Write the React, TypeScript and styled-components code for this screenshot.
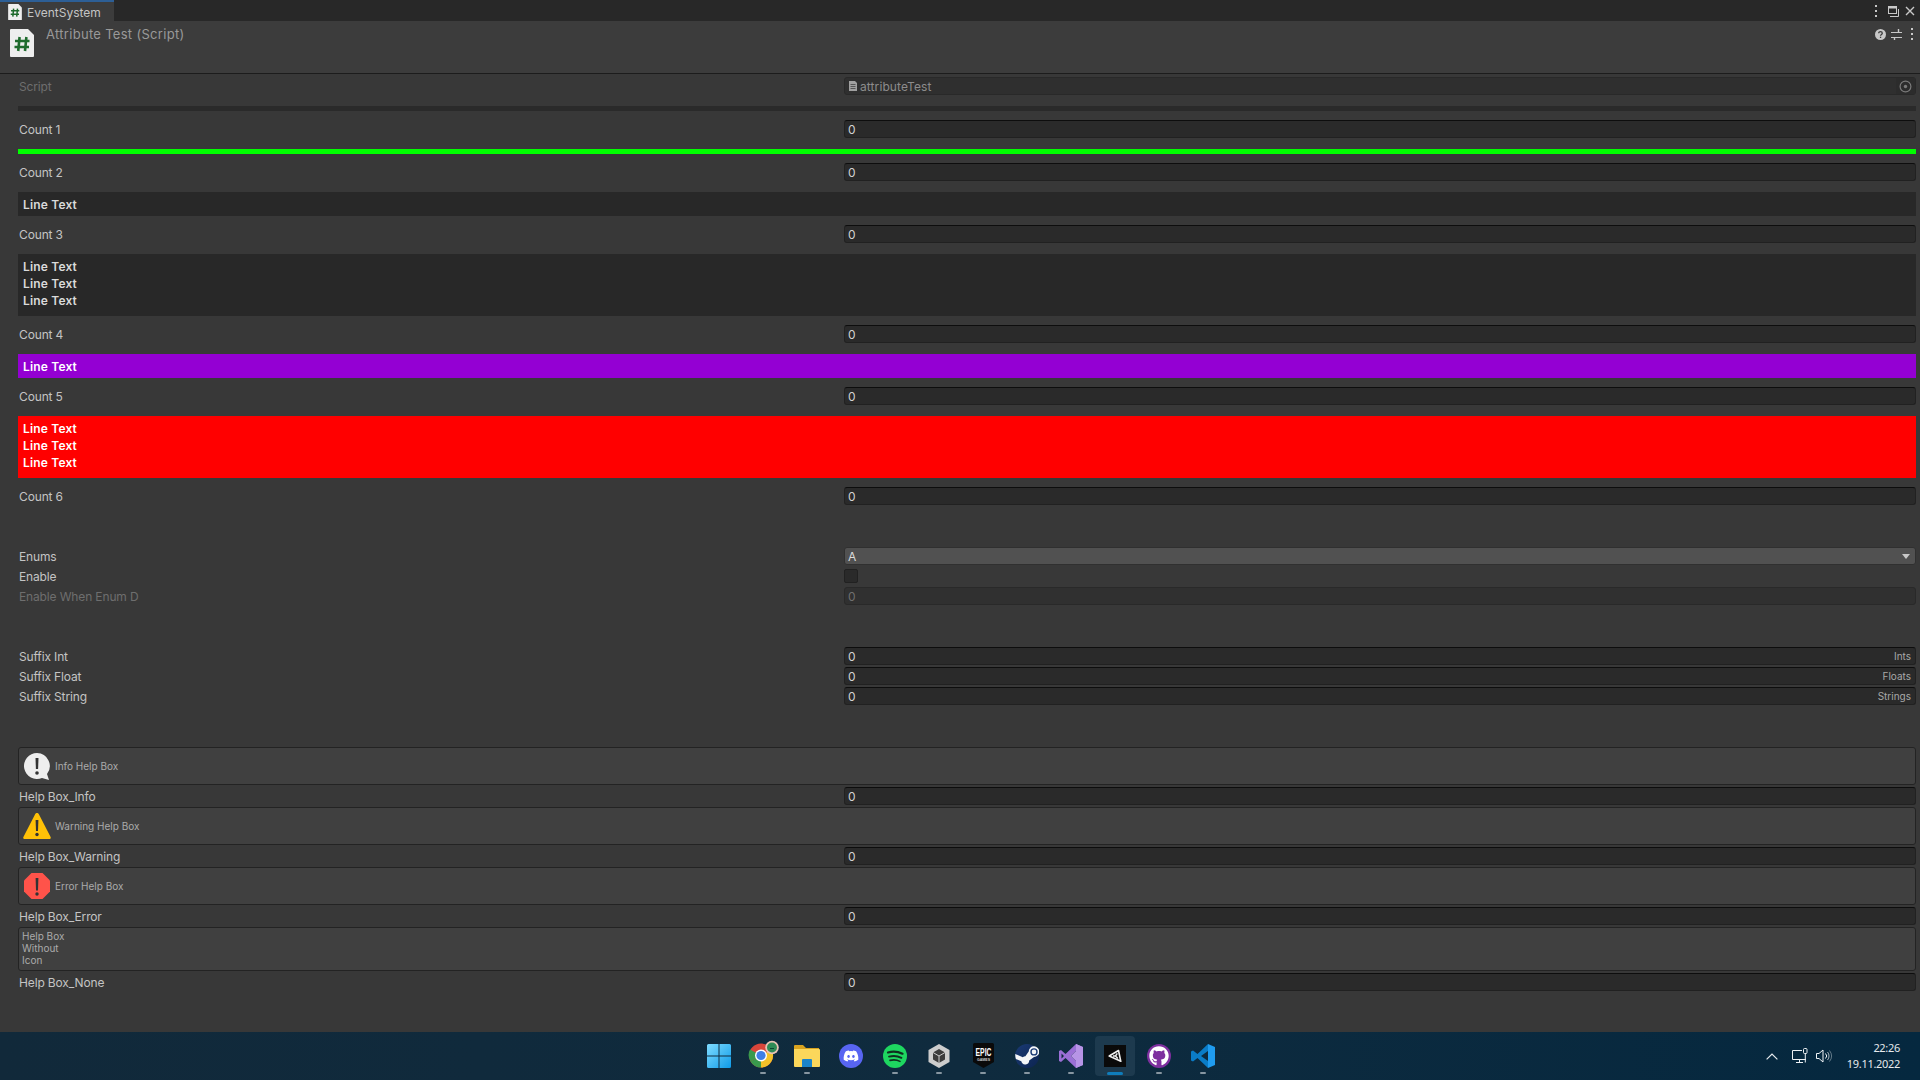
import React from "react";
import styled, { createGlobalStyle } from "styled-components";
import { FaDiscord, FaGithub } from "react-icons/fa";

const Global = createGlobalStyle`
  html, body { margin: 0; padding: 0; background: #383838; }
  body { font-family: Inter, "Liberation Sans", sans-serif; font-size: 12px; overflow: hidden; }
  * { box-sizing: border-box; }
`;

const Screen = styled.div`
  width: 1920px; height: 1080px; display: flex; flex-direction: column; background: #383838;
`;
const TabBar = styled.div`
  height: 21px; background: #282828; display: flex; justify-content: space-between; flex: none;
`;
const Tab = styled.div`
  width: 114px; height: 21px; background: #3c3c3c; border-top: 2px solid #2d5f96; display: flex; align-items: center;
  gap: 5px; padding-left: 8px; padding-top: 1px; color: #c4c4c4; font-size: 12px;
`;
const WindowTools = styled.div`
  display: flex; align-items: center; gap: 3px; padding-right: 3px; padding-top: 1px; color: #c8c8c8;
`;
const ToolSlot = styled.span`
  width: 14px; height: 14px; display: flex; align-items: center; justify-content: center;
`;
const Header = styled.header`
  height: 53px; flex: none; background: #3c3c3c; border-bottom: 1px solid #1c1c1c; display: flex; padding: 8px 1px 0 10px;
`;
const HeaderTitle = styled.div`
  flex: 1; margin-left: 12px; margin-top: -3px; color: #999; font-size: 13px; letter-spacing: 0.3px; line-height: 16px;
`;
const HeaderTools = styled.div`
  display: flex; gap: 2px; color: #c8c8c8; margin-top: -2px; height: 14px;
`;
const Panel = styled.main`
  flex: 1; padding: 0 4px 0 18px; display: flex; flex-direction: column; min-height: 0;
`;
const Row = styled.div<{ $mt: number }>`
  display: flex; height: 18px; flex: none; margin-top: ${(p) => p.$mt}px; align-items: center;
`;
const Label = styled.div<{ $dim?: boolean }>`
  width: 826px; flex: none; padding-left: 1px; color: ${(p) => (p.$dim ? "#6e6e6e" : "#c4c4c4")}; font-size: 12px; letter-spacing: -0.14px;
`;
const Field = styled.div`
  flex: 1; height: 18px; display: flex; align-items: center; justify-content: space-between;
  background: #2a2a2a; border: 1px solid #212121; border-top-color: #0d0d0d; border-radius: 3px;
  padding: 0 4px 0 3px; color: #d2d2d2; font-size: 12px;
`;
const DisabledField = styled(Field)`
  background: #303030; border-color: #292929; color: #6f6f6f;
`;
const Suffix = styled.span`
  font-size: 10px; color: #a8a8a8;
`;
const ScriptField = styled.div`
  flex: 1; height: 18px; display: flex; align-items: center; gap: 3px; background: #2f2f2f;
  border: 1px solid #292929; border-radius: 3px; padding-left: 4px; color: #8c8c8c; font-size: 12px; letter-spacing: 0.1px;
`;
const ScriptName = styled.span`
  flex: 1;
`;
const TargetButton = styled.span`
  width: 19px; height: 16px; background: #2c2c2c; display: flex; align-items: center; justify-content: center;
`;
const Enum = styled.div`
  flex: 1; height: 18px; display: flex; align-items: center; justify-content: space-between; background: #515151;
  border: 1px solid #303030; border-radius: 3px; padding: 0 5px 0 3px; color: #dcdcdc; font-size: 12px;
`;
const Arrow = styled.span`
  width: 0; height: 0; border-left: 4px solid transparent; border-right: 4px solid transparent; border-top: 5px solid #c8c8c8;
`;
const Check = styled.div`
  width: 14px; height: 14px; background: #2a2a2a; border: 1px solid #212121; border-radius: 2px;
`;
const Rule = styled.div<{ $mt: number; $color: string }>`
  height: 5px; flex: none; margin-top: ${(p) => p.$mt}px; background: ${(p) => p.$color};
`;
const LineBox = styled.div<{ $mt: number; $color: string; $multi?: boolean }>`
  flex: none; height: ${(p) => (p.$multi ? 62 : 24)}px; margin-top: ${(p) => p.$mt}px; background: ${(p) => p.$color};
  padding: 4px 5px; color: ${(p) => (p.$color === "#282828" ? "#dadada" : "#ffffff")};
  font-weight: 600; font-size: 12px; line-height: 17px; letter-spacing: 0.17px;
`;
const HelpBox = styled.div<{ $mt: number }>`
  flex: none; height: 38px; margin-top: ${(p) => p.$mt}px; display: flex; align-items: center; gap: 4px; padding-left: 4px;
  background: #404040; border: 1px solid #232323; border-radius: 3px; color: #ababab; font-size: 10px;
`;
const PlainHelp = styled.div<{ $mt: number }>`
  flex: none; height: 44px; margin-top: ${(p) => p.$mt}px; padding: 2px 3px; background: #404040; border: 1px solid #232323;
  border-radius: 3px; color: #ababab; font-size: 10px; line-height: 12px;
`;

const Taskbar = styled.footer`
  height: 48px; flex: none; background: linear-gradient(90deg, #11293a 0%, #0f2b3e 50%, #05283f 100%);
  display: grid; grid-template-columns: 1fr auto 1fr; align-items: stretch;
`;
const AppStrip = styled.div`
  grid-column: 2; display: flex; padding-left: 1px; margin-right: -1px;
`;
const AppSlot = styled.div<{ $active?: boolean }>`
  position: relative; width: 44px; height: 48px; display: flex; align-items: center; justify-content: center;
  padding-bottom: 1px;
  &::before {
    content: ""; position: absolute; left: 2px; right: 2px; top: 4px; bottom: 4px; border-radius: 4px;
    background: ${(p) => (p.$active ? "#1d3a4e" : "transparent")};
  }
  & > * { position: relative; }
`;
const RunDot = styled.span<{ $active?: boolean }>`
  position: absolute !important; left: 50%; bottom: ${(p) => (p.$active ? 5 : 6)}px; transform: translateX(-50%);
  width: ${(p) => (p.$active ? 16 : 6)}px; height: ${(p) => (p.$active ? 3 : 2)}px; border-radius: 2px;
  background: ${(p) => (p.$active ? "#0f7dbb" : "#8796a1")};
`;
const RoundIcon = styled.span<{ $color: string }>`
  width: 24px; height: 24px; border-radius: 50%; background: ${(p) => p.$color}; color: #fff;
  display: flex; align-items: center; justify-content: center;
`;
const UnityTile = styled.span`
  width: 22px; height: 22px; background: #0a0a0a; display: flex; align-items: center; justify-content: center;
`;
const Tray = styled.div`
  grid-column: 3; display: flex; align-items: center; justify-content: flex-end; padding-right: 20px; color: #eef2f5;
`;
const TrayIcon = styled.span<{ $w: number }>`
  width: ${(p) => p.$w}px; display: flex; justify-content: center;
`;
const Clock = styled.div`
  margin-left: 10px; width: 56px; text-align: right; font-family: "Noto Sans", sans-serif; font-size: 11px; line-height: 16px;
  letter-spacing: -0.3px; color: #e6eaed;
`;

const ScriptIcon = ({ w, h }: { w: number; h: number }) => (
  <svg width={w} height={h} viewBox="0 0 24 28" style={{ flex: "none" }}>
    <path d="M1 0h17l6 6v21a1 1 0 0 1-1 1H1a1 1 0 0 1-1-1V1a1 1 0 0 1 1-1z" fill="#eeeeee" />
    <g stroke="#1f6b2d" strokeWidth="2.6" fill="none">
      <path d="M9.6 8l-1.4 14M16.4 8L15 22M5 12h14.5M4.5 18H19" />
    </g>
  </svg>
);
const Dots = () => (
  <svg width="4" height="12" viewBox="0 0 4 12"><g fill="#c8c8c8"><rect x="1" y="0" width="2" height="2" /><rect x="1" y="5" width="2" height="2" /><rect x="1" y="10" width="2" height="2" /></g></svg>
);
const Restore = () => (
  <svg width="11" height="11" viewBox="0 0 11 11" fill="none" stroke="#c8c8c8"><rect x="0.5" y="0.5" width="8" height="7" /><path d="M0.5 1.5h8" strokeWidth="2" /><path d="M2 10.5h8.5V3" /></svg>
);
const Close = () => (
  <svg width="10" height="10" viewBox="0 0 10 10" stroke="#c8c8c8" strokeWidth="1.4"><path d="M1 1l8 8M9 1l-8 8" /></svg>
);
const Help = () => (
  <svg width="11" height="11" viewBox="0 0 11 11"><circle cx="5.5" cy="5.5" r="5.5" fill="#c8c8c8" /><path d="M3.7 4.2c0-2.2 3.6-2.2 3.6 0 0 1.3-1.8 1.2-1.8 2.6" fill="none" stroke="#3c3c3c" strokeWidth="1.3" /><rect x="4.9" y="7.7" width="1.3" height="1.3" fill="#3c3c3c" /></svg>
);
const Sliders = () => (
  <svg width="11" height="11" viewBox="0 0 11 11" stroke="#c8c8c8"><path d="M0 3.5h11M0 8.5h11" /><path d="M7.5 0v3.5M3.5 8.5v2.5" strokeWidth="1.4" /></svg>
);
const Target = () => (
  <svg width="13" height="13" viewBox="0 0 13 13"><circle cx="6.5" cy="6.5" r="5.4" fill="none" stroke="#7a7a7a" strokeWidth="1.2" /><circle cx="6.5" cy="6.5" r="1.7" fill="#7a7a7a" /></svg>
);
const MiniDoc = () => (
  <svg width="8" height="10" viewBox="0 0 8 10"><path d="M0 0h6l2 2v8H0z" fill="#a0a0a0" /><path d="M1.5 3.5h5M1.5 5.5h5M1.5 7.5h5" stroke="#555" /></svg>
);
const InfoIcon = () => (
  <svg width="28" height="29" viewBox="0 0 28 29">
    <path d="M14 1a13 13 0 1 0 5 25l7 2-2-6A13 13 0 0 0 14 1z" fill="#eeeeee" />
    <path d="M12.5 6h3l-.4 11h-2.2z" fill="#333" /><circle cx="14" cy="21" r="1.8" fill="#333" />
  </svg>
);
const WarnIcon = () => (
  <svg width="28" height="28" viewBox="0 0 28 28">
    <path d="M14 1c1 0 1.6.6 2 1.4L27.6 25c.5 1-.2 2-1.3 2H1.7C.6 27-.1 26 .4 25L12 2.4C12.4 1.6 13 1 14 1z" fill="#ffc107" />
    <path d="M12.6 8h2.8l-.4 11h-2z" fill="#333" /><circle cx="14" cy="22.5" r="1.7" fill="#333" />
  </svg>
);
const ErrorIcon = () => (
  <svg width="28" height="28" viewBox="0 0 28 28">
    <path d="M8.5 1h11L27 8.5v11L19.5 27h-11L1 19.5v-11z" fill="#ff534a" />
    <path d="M12.6 6h2.8l-.4 12.5h-2z" fill="#333" /><circle cx="14" cy="22" r="1.7" fill="#333" />
  </svg>
);

const WinLogo = () => (
  <svg width="24" height="24" viewBox="0 0 24 24">
    <defs><linearGradient id="win" x1="0" y1="0" x2="1" y2="1"><stop offset="0" stopColor="#7fdcff" /><stop offset="1" stopColor="#0f9be8" /></linearGradient></defs>
    <path d="M1.5 0H11.5V11.5H0V1.5A1.5 1.5 0 0 1 1.5 0zM12.5 0H22.5A1.5 1.5 0 0 1 24 1.5V11.5H12.5zM0 12.5H11.5V24H1.5A1.5 1.5 0 0 1 0 22.5zM12.5 12.5H24V22.5A1.5 1.5 0 0 1 22.5 24H12.5z" fill="url(#win)" />
  </svg>
);
const Chrome = () => (
  <svg width="32" height="32" viewBox="0 0 32 32">
    <g transform="translate(1,-2.5)">
      <circle cx="13" cy="18" r="12" fill="#d8453a" />
      <path d="M13 18 L2.6 24 A12 12 0 0 1 2 12 Z" fill="#3a9a4c" />
      <path d="M2.6 24 A12 12 0 0 0 13 30 L13 18Z" fill="#3a9a4c" />
      <path d="M13 18 L23.4 12 A12 12 0 0 1 13 30 Z" fill="#f3c229" />
      <circle cx="13" cy="18" r="6" fill="#fff" /><circle cx="13" cy="18" r="4.6" fill="#3f7fe6" />
    </g>
    <circle cx="25" cy="7.5" r="6.8" fill="#e8c3b4" /><circle cx="25" cy="7.5" r="5" fill="#2f8b56" />
    <path d="M23 8.5h4" stroke="#143" strokeWidth="1" />
  </svg>
);
const Folder = () => (
  <svg width="26" height="22" viewBox="0 0 26 22">
    <path d="M1 0h8l3 3h13v4H0V1a1 1 0 0 1 1-1z" fill="#d9a31f" />
    <path d="M0 4h25a1 1 0 0 1 1 1v16a1 1 0 0 1-1 1H1a1 1 0 0 1-1-1z" fill="#fbd75b" />
    <path d="M8 15a1 1 0 0 1 1-1h8a1 1 0 0 1 1 1v7H8z" fill="#1c84c9" />
  </svg>
);
const Spotify = () => (
  <svg width="24" height="24" viewBox="0 0 24 24">
    <circle cx="12" cy="12" r="12" fill="#1ed760" />
    <g fill="none" stroke="#10301f" strokeLinecap="round">
      <path d="M5 8.5c5-1.5 10-1 14.5 1.2" strokeWidth="2.2" /><path d="M6 12.6c4.5-1.2 8.6-.8 12.4 1.2" strokeWidth="1.9" /><path d="M7 16.4c3.6-.9 7-.6 10 1" strokeWidth="1.6" />
    </g>
  </svg>
);
const UnityCube = () => (
  <svg width="22" height="24" viewBox="0 0 22 24">
    <path d="M11 0l10.5 6v12L11 24 .5 18V6z" fill="#cdcdcd" />
    <path d="M11 5l6 3.5v7L11 19l-6-3.5v-7z" fill="#3b3b3b" />
    <path d="M11 12V19M11 12l6-3.5M11 12L5 8.5" stroke="#cdcdcd" strokeWidth="1" />
  </svg>
);
const Epic = () => (
  <svg width="21" height="25" viewBox="0 0 21 25">
    <path d="M1.5 0h18A1.5 1.5 0 0 1 21 1.5V19l-10.500 6L0 19V1.500A1.5 1.5 0 0 1 1.5 0z" fill="#0a0a0a" />
    <text transform="translate(10.5,12.5) scale(0.85,1.35)" textAnchor="middle" fill="#fff" fontFamily="'Liberation Sans', sans-serif" fontWeight="700" fontSize="8">EPIC</text>
    <text x="10.5" y="18" textAnchor="middle" fill="#ccc" fontFamily="'Liberation Sans', sans-serif" fontWeight="700" fontSize="3.6">GAMES</text>
  </svg>
);
const Steam = () => (
  <svg width="24" height="24" viewBox="0 0 24 24">
    <defs><linearGradient id="st" x1="0" y1="0" x2="1" y2="1"><stop offset="0" stopColor="#1a3a74" /><stop offset="1" stopColor="#0c2450" /></linearGradient></defs>
    <circle cx="12" cy="12" r="12" fill="url(#st)" />
    <path d="M.3 10l7.5 3.2a4 4 0 0 1 2.6-.9l3.3-4.8a5.3 5.3 0 1 1 5.3 5.4l-4.8 3.5a4 4 0 0 1-7.9.9L.9 15A12 12 0 0 1 .3 10z" fill="#f4f6f8" />
    <circle cx="19" cy="7.9" r="3" fill="none" stroke="#1a3a74" strokeWidth="1.4" />
  </svg>
);
const VS = () => (
  <svg width="24" height="24" viewBox="0 0 24 24">
    <path d="M17 0l7 3v18l-7 3L6.5 14 2 18l-2-1V7l2-1 4.5 4zM17 7l-5 5 5 5zM2.5 9.5v5L5 12z" fill="#9b6fd6" />
    <path d="M17 0l7 3v18l-7 3z M17 7v10l-5-5z" fill="#b794e6" fillRule="evenodd" />
  </svg>
);
const VSCode = () => (
  <svg width="24" height="24" viewBox="0 0 24 24">
    <path d="M17 0l7 3v18l-7 3z" fill="#1f9cf0" />
    <path d="M17 0L6.5 10 2 6.5 0 7.5v9L2 17.5 6.5 14 17 24v-7l-7-5 7-5z" fill="#0a7cc7" />
  </svg>
);
const UnityMark = () => (
  <svg width="14" height="14" viewBox="0 0 14 14" fill="none" stroke="#f0f0f0" strokeLinejoin="round">
    <path d="M1.2 7L10.5 1.5L12.8 12.3Z" strokeWidth="1.6" />
    <path d="M7.5 7L5 7M7.5 7L9.3 4.3M7.5 7L9.8 9.5" strokeWidth="1.4" />
  </svg>
);
const Chevron = () => (
  <svg width="12" height="7" viewBox="0 0 12 7" fill="none" stroke="#e8ecef" strokeWidth="1.2"><path d="M.6 6.4L6 1l5.4 5.4" /></svg>
);
const Monitor = () => (
  <svg width="16" height="16" viewBox="0 0 16 16" fill="none" stroke="#eef2f5"><path d="M10 2.5H.5v9h13.5" /><path d="M4 14.5h7M7.5 11.5v3" /><rect x="11.5" y=".5" width="3.5" height="5" rx="1" /><path d="M13.3 5.5v9" /></svg>
);
const Speaker = () => (
  <svg width="17" height="14" viewBox="0 0 17 14" fill="none" stroke="#eef2f5"><path d="M.5 4.5h2.5L7 1v12L3 9.5H.5z" /><path d="M9.5 4.5a3.5 3.5 0 0 1 0 5" /><path d="M11.5 3a6 6 0 0 1 0 8" opacity=".7" /><path d="M13.5 1.5a9 9 0 0 1 0 11" opacity=".4" /></svg>
);

export default function App() {
  const lines = ["Line Text", "Line Text", "Line Text"];
  return (
    <Screen>
      <Global />
      <TabBar>
        <Tab><ScriptIcon w={14} h={16} />EventSystem</Tab>
        <WindowTools>
          <ToolSlot><Dots /></ToolSlot>
          <ToolSlot><Restore /></ToolSlot>
          <ToolSlot><Close /></ToolSlot>
        </WindowTools>
      </TabBar>
      <Header>
        <ScriptIcon w={24} h={28} />
        <HeaderTitle>Attribute Test (Script)</HeaderTitle>
        <HeaderTools>
          <ToolSlot><Help /></ToolSlot>
          <ToolSlot><Sliders /></ToolSlot>
          <ToolSlot><Dots /></ToolSlot>
        </HeaderTools>
      </Header>
      <Panel>
        <Row $mt={3}><Label $dim>Script</Label><ScriptField><MiniDoc /><ScriptName>attributeTest</ScriptName><TargetButton><Target /></TargetButton></ScriptField></Row>
        <Rule $mt={11} $color="#2a2a2a" />
        <Row $mt={9}><Label>Count 1</Label><Field>0</Field></Row>
        <Rule $mt={11} $color="#00ff00" />
        <Row $mt={9}><Label>Count 2</Label><Field>0</Field></Row>
        <LineBox $mt={11} $color="#282828">Line Text</LineBox>
        <Row $mt={9}><Label>Count 3</Label><Field>0</Field></Row>
        <LineBox $mt={11} $color="#282828" $multi>{lines.map((t, i) => <div key={i}>{t}</div>)}</LineBox>
        <Row $mt={9}><Label>Count 4</Label><Field>0</Field></Row>
        <LineBox $mt={11} $color="#9400d3">Line Text</LineBox>
        <Row $mt={9}><Label>Count 5</Label><Field>0</Field></Row>
        <LineBox $mt={11} $color="#ff0000" $multi>{lines.map((t, i) => <div key={i}>{t}</div>)}</LineBox>
        <Row $mt={9}><Label>Count 6</Label><Field>0</Field></Row>
        <Row $mt={42}><Label>Enums</Label><Enum>A<Arrow /></Enum></Row>
        <Row $mt={2}><Label>Enable</Label><Check /></Row>
        <Row $mt={2}><Label $dim>Enable When Enum D</Label><DisabledField>0</DisabledField></Row>
        <Row $mt={42}><Label>Suffix Int</Label><Field>0<Suffix>Ints</Suffix></Field></Row>
        <Row $mt={2}><Label>Suffix Float</Label><Field>0<Suffix>Floats</Suffix></Field></Row>
        <Row $mt={2}><Label>Suffix String</Label><Field>0<Suffix>Strings</Suffix></Field></Row>
        <HelpBox $mt={42}><InfoIcon />Info Help Box</HelpBox>
        <Row $mt={2}><Label>Help Box_Info</Label><Field>0</Field></Row>
        <HelpBox $mt={2}><WarnIcon />Warning Help Box</HelpBox>
        <Row $mt={2}><Label>Help Box_Warning</Label><Field>0</Field></Row>
        <HelpBox $mt={2}><ErrorIcon />Error Help Box</HelpBox>
        <Row $mt={2}><Label>Help Box_Error</Label><Field>0</Field></Row>
        <PlainHelp $mt={2}><div>Help Box</div><div>Without</div><div>Icon</div></PlainHelp>
        <Row $mt={2}><Label>Help Box_None</Label><Field>0</Field></Row>
      </Panel>
      <Taskbar>
        <AppStrip>
          <AppSlot><WinLogo /></AppSlot>
          <AppSlot><Chrome /><RunDot /></AppSlot>
          <AppSlot><Folder /><RunDot /></AppSlot>
          <AppSlot><RoundIcon $color="#5865f2"><FaDiscord size={16} /></RoundIcon></AppSlot>
          <AppSlot><Spotify /><RunDot /></AppSlot>
          <AppSlot><UnityCube /><RunDot /></AppSlot>
          <AppSlot><Epic /><RunDot /></AppSlot>
          <AppSlot><Steam /><RunDot /></AppSlot>
          <AppSlot><VS /><RunDot /></AppSlot>
          <AppSlot $active><UnityTile><UnityMark /></UnityTile><RunDot $active /></AppSlot>
          <AppSlot><RoundIcon $color="#7e2f9f"><FaGithub size={20} /></RoundIcon><RunDot /></AppSlot>
          <AppSlot><VSCode /><RunDot /></AppSlot>
        </AppStrip>
        <Tray>
          <TrayIcon $w={28}><Chevron /></TrayIcon>
          <TrayIcon $w={28}><Monitor /></TrayIcon>
          <TrayIcon $w={20}><Speaker /></TrayIcon>
          <Clock><div>22:26</div><div>19.11.2022</div></Clock>
        </Tray>
      </Taskbar>
    </Screen>
  );
}
